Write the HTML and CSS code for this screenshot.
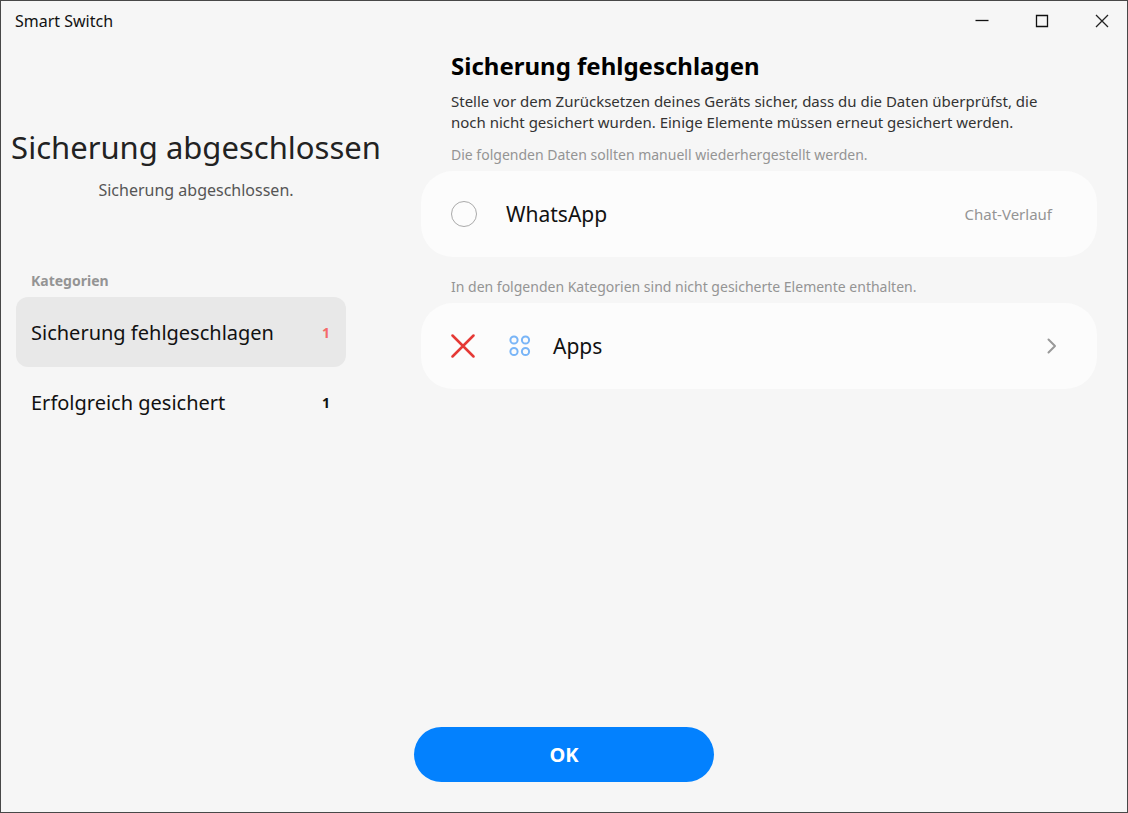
FILE: index.html
```html
<!DOCTYPE html>
<html lang="de">
<head>
<meta charset="utf-8">
<meta name="viewport" content="width=device-width, initial-scale=1">
<title>Smart Switch</title>
<link rel="stylesheet" href="styles.css">
</head>
<body>
<div class="window">
  <header class="titlebar">
    <span class="app-name">Smart Switch</span>
    <div class="window-controls">
      <button type="button" class="window-button" aria-label="Minimieren">
        <svg width="14" height="14" viewBox="0 0 14 14"><path d="M0.500 6.500h13" stroke="#111" stroke-width="1.300"/></svg>
      </button>
      <button type="button" class="window-button" aria-label="Maximieren">
        <svg width="14" height="14" viewBox="0 0 14 14"><path d="M1.500 1.500h11v11h-11z" fill="none" stroke="#111" stroke-width="1.300"/></svg>
      </button>
      <button type="button" class="window-button" aria-label="Schließen">
        <svg width="14" height="14" viewBox="0 0 14 14"><path d="M1 1l12 12M13 1L1 13" stroke="#222" stroke-width="1.300"/></svg>
      </button>
    </div>
  </header>

  <div class="columns">
    <aside class="sidebar">
      <h1 class="status-title">Sicherung abgeschlossen</h1>
      <p class="status-text">Sicherung abgeschlossen.</p>
      <nav class="categories" aria-labelledby="categories-label">
        <h2 class="categories-label" id="categories-label">Kategorien</h2>
        <button type="button" class="category category-active" aria-current="true">
          <span>Sicherung fehlgeschlagen</span>
          <span class="count count-failed">1</span>
        </button>
        <button type="button" class="category">
          <span>Erfolgreich gesichert</span>
          <span class="count">1</span>
        </button>
      </nav>
    </aside>

    <main class="details">
      <h2 class="details-title">Sicherung fehlgeschlagen</h2>
      <p class="details-text">Stelle vor dem Zurücksetzen deines Geräts sicher, dass du die Daten überprüfst, die noch nicht gesichert wurden. Einige Elemente müssen erneut gesichert werden.</p>
      <p class="hint">Die folgenden Daten sollten manuell wiederhergestellt werden.</p>
      <div class="card">
        <input type="checkbox" class="round-check" id="whatsapp">
        <label class="card-label" for="whatsapp">WhatsApp</label>
        <span class="card-note">Chat-Verlauf</span>
      </div>
      <p class="hint hint-spaced">In den folgenden Kategorien sind nicht gesicherte Elemente enthalten.</p>
      <button type="button" class="card card-button">
        <svg class="failed-icon" width="24" height="24" viewBox="0 0 24 24"><path d="M1.500 1.500l21 21M22.500 1.500l-21 21" fill="none" stroke="#e53935" stroke-width="2.500" stroke-linecap="round"/></svg>
        <svg class="apps-icon" width="22" height="22" viewBox="0 0 22 22" fill="none" stroke="#79b5f7" stroke-width="2"><circle cx="5" cy="5" r="3.600"/><circle cx="16.500" cy="5" r="3.600"/><circle cx="5" cy="16.500" r="3.600"/><circle cx="16.500" cy="16.500" r="3.600"/></svg>
        <span class="card-label">Apps</span>
        <svg class="chevron" width="10" height="16" viewBox="0 0 10 16"><path d="M1.500 1.500L8 8l-6.500 6.500" fill="none" stroke="#999" stroke-width="2" stroke-linecap="round" stroke-linejoin="round"/></svg>
      </button>
    </main>
  </div>

  <footer class="footer">
    <button type="button" class="ok-button">OK</button>
  </footer>
</div>
</body>
</html>
```
FILE: styles.css
```css
* {
  box-sizing: border-box;
}

body {
  margin: 0;
  font-family: "Noto Sans", "Open Sans", sans-serif;
  color: #111;
}

h1, h2, p {
  margin: 0;
}

button {
  border: 0;
  background: none;
  font: inherit;
  color: inherit;
}

svg {
  display: block;
}

.window {
  display: flex;
  flex-direction: column;
  min-height: 100vh;
  border: 1px solid #484848;
  background: #f6f6f6;
}

.titlebar {
  display: flex;
  justify-content: space-between;
  align-items: center;
  height: 40px;
  padding-left: 14px;
}

.app-name {
  font-size: 16px;
}

.window-controls {
  display: flex;
  margin-right: -5px;
}

.window-button {
  display: grid;
  place-items: center;
  width: 60px;
  height: 40px;
  padding: 0;
}

.columns {
  display: grid;
  grid-template-columns: 390px minmax(0, 1fr);
  flex: 1;
}

.sidebar {
  padding-top: 82px;
  text-align: center;
}

.status-title {
  font-size: 31px;
  font-weight: 400;
  line-height: 48px;
  white-space: nowrap;
  color: #222;
}

.status-text {
  margin-top: 7px;
  font-size: 16px;
  line-height: 24px;
  color: #555;
}

.categories {
  display: flex;
  flex-direction: column;
  margin-top: 68px;
  padding: 0 45px 0 15px;
  text-align: left;
}

.categories-label {
  margin-bottom: 5px;
  padding-left: 15px;
  font-size: 14px;
  line-height: 22px;
  color: #949494;
}

.category {
  display: flex;
  justify-content: space-between;
  align-items: center;
  height: 70px;
  padding: 0 16px 0 15px;
  border-radius: 12px;
  font-size: 20px;
}

.category-active {
  background: #e8e8e8;
}

.count {
  font-size: 14px;
  font-weight: 700;
}

.count-failed {
  color: #f46a6a;
}

.details {
  padding: 8px 30px 0;
}

.details-title {
  padding-left: 30px;
  font-size: 24px;
  line-height: 34px;
  color: #000;
}

.details-text {
  margin-top: 8px;
  padding: 0 30px;
  font-size: 15px;
  line-height: 21px;
  color: #333;
}

.hint {
  margin: 12px 0 6px;
  padding-left: 30px;
  font-size: 14px;
  line-height: 20px;
  color: #949494;
}

.hint-spaced {
  margin-top: 20px;
}

.card {
  display: flex;
  align-items: center;
  width: 100%;
  height: 86px;
  padding: 0 40px 0 30px;
  border-radius: 32px;
  background: #fcfcfc;
}

.card-label {
  font-size: 21px;
}

.round-check {
  appearance: none;
  width: 26px;
  height: 26px;
  margin: 0 29px 0 0;
  border: 1px solid #aaa;
  border-radius: 50%;
}

.card-note {
  margin-left: auto;
  padding-right: 5px;
  font-size: 15px;
  color: #949494;
}

.failed-icon {
  margin-right: 34px;
}

.apps-icon {
  margin-right: 22px;
}

.chevron {
  margin-left: auto;
}

.footer {
  display: flex;
  justify-content: center;
  padding: 24px 0 30px;
}

.ok-button {
  width: 300px;
  height: 55px;
  border-radius: 28px;
  background: #0381fe;
  font-size: 20px;
  font-weight: 700;
  color: #fff;
}
```
